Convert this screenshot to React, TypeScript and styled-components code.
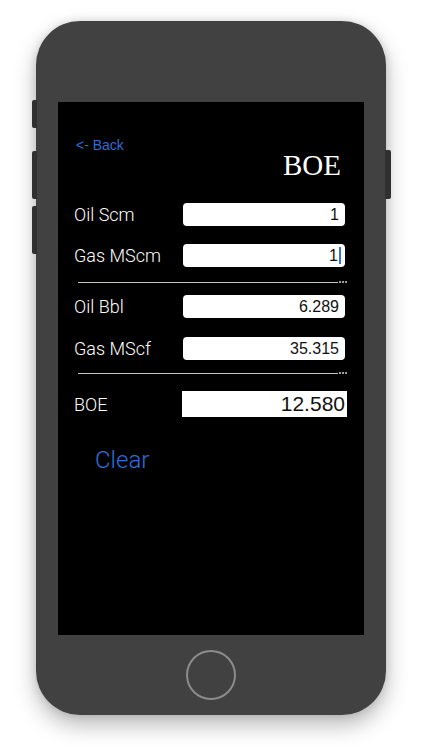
import React from "react";
import styled, { createGlobalStyle } from "styled-components";

const GlobalStyle = createGlobalStyle`
    html, body {
        margin: 0;
        padding: 0;
        background: #ffffff;
    }
    * {
        box-sizing: border-box;
    }
`;

type Field = {
    label: string;
    value: string;
    focused?: boolean;
};

const inputs: Field[] = [
    { label: "Oil Scm", value: "1" },
    { label: "Gas MScm", value: "1", focused: true },
];

const converted: Field[] = [
    { label: "Oil Bbl", value: "6.289" },
    { label: "Gas MScf", value: "35.315" },
];

const Stage = styled.div`
    width: 422px;
    height: 750px;
    padding: 21px 0 0 36px;
    overflow: hidden;
`;

const Phone = styled.div`
    position: relative;
    width: 350px;
    height: 694px;
    padding: 81px 22px 0;
    background: #414141;
    border-radius: 44px;
    box-shadow: 0 10px 22px rgba(0, 0, 0, 0.28), 0 0 8px rgba(0, 0, 0, 0.12);
    display: flex;
    flex-direction: column;
`;

const SideButton = styled.div<{ $side: "left" | "right"; $top: number; $height: number }>`
    position: absolute;
    top: ${(p) => p.$top}px;
    ${(p) => (p.$side === "left" ? "left: -4px;" : "right: -5px;")}
    width: ${(p) => (p.$side === "left" ? 5 : 6)}px;
    height: ${(p) => p.$height}px;
    background: #303030;
    border-radius: ${(p) => (p.$side === "left" ? "2px 0 0 2px" : "0 2px 2px 0")};
`;

const Screen = styled.div`
    width: 306px;
    height: 533px;
    background: #000000;
    padding: 35px 19px 0 16px;
    display: flex;
    flex-direction: column;
    font-family: Roboto, "Liberation Sans", sans-serif;
`;

const BackLink = styled.a`
    align-self: flex-start;
    margin-left: 2px;
    font-size: 14px;
    line-height: 16px;
    color: #2f6ed6;
    font-family: "Liberation Sans", sans-serif;
    text-decoration: none;
`;

const Title = styled.h1`
    margin: 0 4px 0 0;
    align-self: flex-end;
    font-family: "Liberation Serif", "Times New Roman", serif;
    font-weight: 400;
    font-size: 29px;
    line-height: 24px;
    color: #ffffff;
`;

const Row = styled.div<{ $gap: number }>`
    display: flex;
    align-items: center;
    justify-content: space-between;
    margin-top: ${(p) => p.$gap}px;
`;

const Label = styled.span`
    font-size: 18px;
    font-weight: 300;
    color: #ffffff;
`;

const Box = styled.div`
    width: 162px;
    height: 23px;
    padding-right: 6px;
    background: #ffffff;
    border-radius: 4px;
    display: flex;
    align-items: center;
    justify-content: flex-end;
    font-family: "Liberation Sans", sans-serif;
    font-size: 16px;
    color: #111111;
`;

const FocusedBox = styled(Box)`
    padding-right: 4px;
`;

const Caret = styled.span`
    width: 2px;
    height: 17px;
    margin-left: 1px;
    background: #3a6fe0;
`;

const ResultBox = styled.div`
    width: 165px;
    height: 26px;
    margin-right: -2px;
    padding-right: 2px;
    background: #ffffff;
    display: flex;
    align-items: center;
    justify-content: flex-end;
    font-family: "Liberation Sans", sans-serif;
    font-size: 21px;
    color: #111111;
`;

const Separator = styled.div<{ $top: number; $bottom: number }>`
    display: flex;
    align-items: center;
    margin: ${(p) => p.$top}px -2px ${(p) => p.$bottom}px 4px;
    height: 1px;
`;

const Line = styled.div`
    flex: 1;
    height: 1px;
    background: #c4c4c4;
`;

const Dots = styled.span`
    width: 8px;
    height: 0;
    margin: -1px 0 0 1px;
    border-top: 2px dotted #a0a0a0;
`;

const ClearButton = styled.button`
    align-self: flex-start;
    margin: 29px 0 0 21px;
    padding: 0;
    border: none;
    background: transparent;
    font-family: Roboto, "Liberation Sans", sans-serif;
    font-weight: 300;
    font-size: 24px;
    line-height: 28px;
    color: #2f6ed6;
`;

const Chin = styled.div`
    flex: 1;
    display: flex;
    align-items: center;
    justify-content: center;
`;

const HomeButton = styled.div`
    width: 50px;
    height: 50px;
    border-radius: 50%;
    border: 2px solid #8c8c8c;
`;

const FieldRow = ({ field, gap }: { field: Field; gap: number }) => (
    <Row $gap={gap}>
        <Label>{field.label}</Label>
        {field.focused ? (
            <FocusedBox>
                {field.value}
                <Caret />
            </FocusedBox>
        ) : (
            <Box>{field.value}</Box>
        )}
    </Row>
);

export default function App() {
    return (
        <>
            <GlobalStyle />
            <Stage>
                <Phone>
                    <SideButton $side="left" $top={79} $height={28} />
                    <SideButton $side="left" $top={130} $height={48} />
                    <SideButton $side="left" $top={185} $height={48} />
                    <SideButton $side="right" $top={129} $height={49} />
                    <Screen>
                        <BackLink href="#">&lt;- Back</BackLink>
                        <Title>BOE</Title>
                        <FieldRow field={inputs[0]} gap={26} />
                        <FieldRow field={inputs[1]} gap={18} />
                        <Separator $top={15} $bottom={12}>
                            <Line />
                            <Dots />
                        </Separator>
                        <FieldRow field={converted[0]} gap={0} />
                        <FieldRow field={converted[1]} gap={19} />
                        <Separator $top={13} $bottom={17}>
                            <Line />
                            <Dots />
                        </Separator>
                        <Row $gap={0}>
                            <Label>BOE</Label>
                            <ResultBox>12.580</ResultBox>
                        </Row>
                        <ClearButton>Clear</ClearButton>
                    </Screen>
                    <Chin>
                        <HomeButton />
                    </Chin>
                </Phone>
            </Stage>
        </>
    );
}
